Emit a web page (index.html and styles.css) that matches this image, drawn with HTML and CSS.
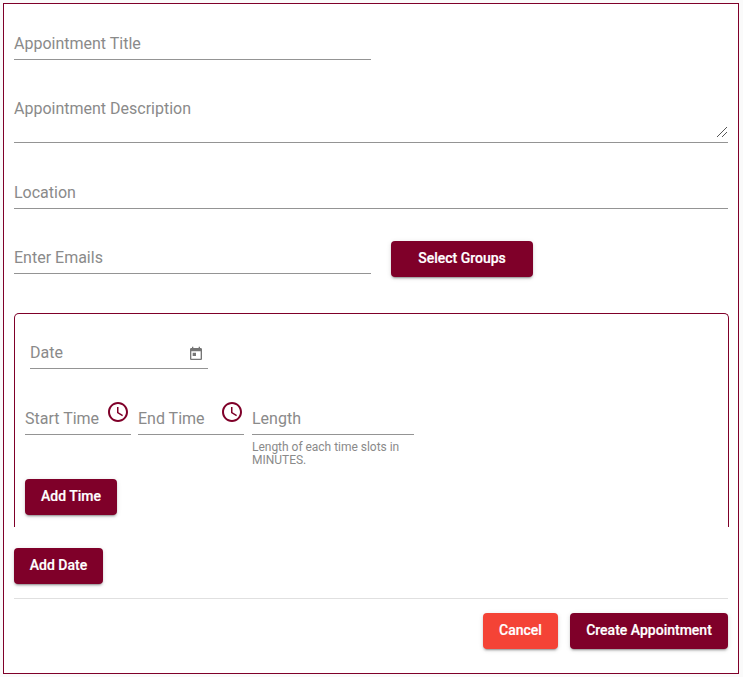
FILE: index.html
```html
<!DOCTYPE html>
<html lang="en">
<head>
<meta charset="utf-8">
<title>Create Appointment</title>
<link rel="stylesheet" href="styles.css">
</head>
<body>
<main class="panel">
  <div class="field title"><span class="label">Appointment Title</span></div>
  <div class="field description"><span class="label">Appointment Description</span>
    <svg class="grip" width="10" height="10" viewBox="0 0 10 10" shape-rendering="crispEdges"><path d="M0 10L10 0M5 10L10 5"/></svg>
  </div>
  <div class="field location"><span class="label">Location</span></div>
  <div class="email-row">
    <div class="field emails"><span class="label">Enter Emails</span></div>
    <button class="btn select">Select Groups</button>
  </div>
  <section class="slot">
    <div class="field date"><span class="label">Date</span>
      <svg class="calendar" width="16" height="16" viewBox="0 0 24 24"><path d="M19 3h-1V1h-2v2H8V1H6v2H5c-1.11 0-1.99.9-1.99 2L3 19c0 1.1.89 2 2 2h14c1.1 0 2-.9 2-2V5c0-1.1-.9-2-2-2zm0 16H5V8h14v11zM7 10h5v5H7z"/></svg>
    </div>
    <div class="time-row">
      <div class="field time"><span class="label">Start Time</span>
        <svg class="clock" width="24" height="24" viewBox="0 0 24 24"><path d="M11.99 2C6.47 2 2 6.48 2 12s4.47 10 9.99 10C17.52 22 22 17.52 22 12S17.52 2 11.99 2zM12 20c-4.42 0-8-3.58-8-8s3.58-8 8-8 8 3.58 8 8-3.58 8-8 8z"/><path d="M12.5 7H11v6l5.25 3.15.75-1.23-4.5-2.67z"/></svg>
      </div>
      <div class="field time"><span class="label">End Time</span>
        <svg class="clock" width="24" height="24" viewBox="0 0 24 24"><path d="M11.99 2C6.47 2 2 6.48 2 12s4.47 10 9.99 10C17.52 22 22 17.52 22 12S17.52 2 11.99 2zM12 20c-4.42 0-8-3.58-8-8s3.58-8 8-8 8 3.58 8 8-3.58 8-8 8z"/><path d="M12.5 7H11v6l5.25 3.15.75-1.23-4.5-2.67z"/></svg>
      </div>
      <div class="length-group">
        <div class="field length"><span class="label">Length</span></div>
        <p class="hint">Length of each time slots in MINUTES.</p>
      </div>
    </div>
    <button class="btn add-time">Add Time</button>
  </section>
  <button class="btn add-date">Add Date</button>
  <footer class="actions">
    <button class="btn cancel">Cancel</button>
    <button class="btn create">Create Appointment</button>
  </footer>
</main>
</body>
</html>
```
FILE: styles.css
```css
* { box-sizing: border-box; }
body {
  margin: 0;
  padding: 3px;
  background: #fafafa;
  font-family: Roboto, "Liberation Sans", sans-serif;
}
.panel {
  display: flex;
  flex-direction: column;
  width: 736px;
  height: 671px;
  padding: 26px 10px 0;
  background: #fff;
  border: 1px solid #7f0029;
}
.field {
  display: flex;
  justify-content: space-between;
  height: 30px;
  border-bottom: 1px solid #949494;
  color: #8a8a8a;
  font-size: 16px;
  line-height: 28px;
  white-space: nowrap;
}
.title { width: 357px; }
.description { height: 48px; margin-top: 35px; }
.grip {
  align-self: flex-end;
  margin: 0 1px 5px 0;
  fill: none;
  stroke: #555;
}
.location { margin-top: 36px; }
.email-row {
  display: flex;
  gap: 20px;
  height: 36px;
  margin-top: 32px;
}
.emails { width: 357px; height: 33px; padding-top: 3px; }
.btn {
  height: 36px;
  padding: 0 0 2px;
  border: 0;
  border-radius: 4px;
  background: #7f0029;
  color: #fff;
  font: 500 14px/34px Roboto, "Liberation Sans", sans-serif;
  -webkit-text-stroke: 0.2px #fff;
  text-align: center;
  white-space: nowrap;
  box-shadow: 0 3px 1px -2px rgba(0,0,0,.2), 0 2px 2px rgba(0,0,0,.14), 0 1px 5px rgba(0,0,0,.12);
}
.select { width: 142px; }
.slot {
  width: 715px;
  height: 214px;
  margin-top: 36px;
  padding: 24px 10px 0;
  border: 1px solid #7f0029;
  border-bottom-width: 0;
  border-radius: 5px 5px 0 0;
}
.date { width: 178px; height: 31px; padding-top: 1px; margin-left: 5px; }
.calendar { margin: 7px 4px 0 0; fill: #757575; }
.time-row { display: flex; gap: 7px; margin-top: 31px; }
.time { width: 106px; height: 35px; padding-top: 5px; }
.time:nth-child(2) { margin-right: 1px; }
.clock { margin: -5px 1px 0 0; fill: #7f0029; }
.time:nth-child(2) .clock { margin-right: 0; }
.length { width: 162px; height: 35px; padding-top: 5px; }
.hint {
  width: 162px;
  margin: 6px 0 0;
  color: #8a8a8a;
  font-size: 12px;
  line-height: 13px;
  letter-spacing: -.02px;
}
.add-time { display: block; width: 92px; margin-top: 12px; }
.add-date { width: 89px; margin-top: 21px; flex: none; }
.actions {
  display: flex;
  justify-content: flex-end;
  gap: 12px;
  margin-top: 14px;
  padding-top: 14px;
  border-top: 1px solid #e0e0e0;
}
.cancel { width: 75px; background: #f44336; }
.create { width: 158px; }
```
